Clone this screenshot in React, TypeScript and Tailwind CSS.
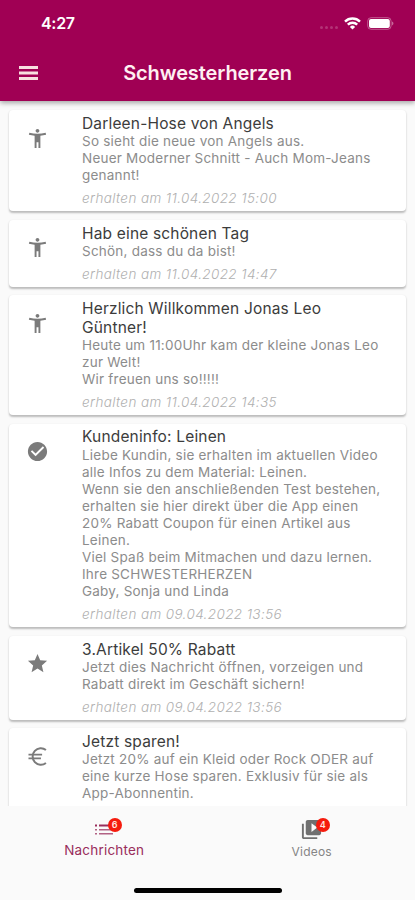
import type { ComponentType } from "react";
import { MdAccessibilityNew, MdCheckCircle, MdStar, MdVideoLibrary } from "react-icons/md";

interface Message {
  icon: ComponentType<{ className?: string }>;
  title: string;
  text: string;
  date?: string;
}

const EuroIcon = ({ className }: { className?: string }) => (
  <svg className={className} viewBox="0 0 24 24" fill="none" stroke="currentColor" strokeWidth="2.1">
    <path d="M20.8 5.2a8.6 8.6 0 1 0 0 13.6" />
    <path d="M2.6 10.1h14.2M2.6 14h13" strokeWidth="1.7" />
  </svg>
);

const messages: Message[] = [
  {
    icon: MdAccessibilityNew,
    title: "Darleen-Hose von Angels",
    text: "So sieht die neue von Angels aus.\nNeuer Moderner Schnitt - Auch Mom-Jeans\ngenannt!",
    date: "11.04.2022 15:00",
  },
  {
    icon: MdAccessibilityNew,
    title: "Hab eine schönen Tag",
    text: "Schön, dass du da bist!",
    date: "11.04.2022 14:47",
  },
  {
    icon: MdAccessibilityNew,
    title: "Herzlich Willkommen Jonas Leo\nGüntner!",
    text: "Heute um 11:00Uhr kam der kleine Jonas Leo\nzur Welt!\nWir freuen uns so!!!!!",
    date: "11.04.2022 14:35",
  },
  {
    icon: MdCheckCircle,
    title: "Kundeninfo: Leinen",
    text: "Liebe Kundin, sie erhalten im aktuellen Video\nalle Infos zu dem Material: Leinen.\nWenn sie den anschließenden Test bestehen,\nerhalten sie hier direkt über die App einen\n20% Rabatt Coupon für einen Artikel aus\nLeinen.\nViel Spaß beim Mitmachen und dazu lernen.\nIhre SCHWESTERHERZEN\nGaby, Sonja und Linda",
    date: "09.04.2022 13:56",
  },
  {
    icon: MdStar,
    title: "3.Artikel 50% Rabatt",
    text: "Jetzt dies Nachricht öffnen, vorzeigen und\nRabatt direkt im Geschäft sichern!",
    date: "09.04.2022 13:56",
  },
  {
    icon: EuroIcon,
    title: "Jetzt sparen!",
    text: "Jetzt 20% auf ein Kleid oder Rock ODER auf\neine kurze Hose sparen. Exklusiv für sie als\nApp-Abonnentin.",
  },
];

const StatusBar = () => (
  <div className="flex h-[46px] items-center justify-between pl-[41px] pr-[21px] text-white">
    <span className="text-[16px] font-semibold tracking-[-0.3px]">4:27</span>
    <div className="flex items-center">
      <div className="mr-[6px] mt-[8px] flex gap-[2px]">
        {[0, 1, 2, 3].map((dot) => (
          <span key={dot} className="h-[3px] w-[3px] rounded-full bg-white/20" />
        ))}
      </div>
      <svg width="17" height="13" viewBox="0 0 17 13" fill="none" stroke="white" strokeWidth="2.4">
        <path d="M1 4.6a10.6 10.6 0 0 1 15 0" />
        <path d="M3.8 7.7a6.7 6.7 0 0 1 9.4 0" />
        <path d="M8.5 12.6 5.9 9.9a3.7 3.7 0 0 1 5.2 0z" fill="white" stroke="none" />
      </svg>
      <svg className="ml-[6px]" width="27" height="13" viewBox="0 0 27 13">
        <rect x="0.7" y="0.7" width="23.4" height="11.6" rx="3.4" fill="none" stroke="white" strokeOpacity="0.35" />
        <rect x="2" y="2" width="20.8" height="9" rx="2" fill="white" />
        <path d="M25.2 4.6c1.6.6 1.6 3.2 0 3.8z" fill="white" fillOpacity="0.5" />
      </svg>
    </div>
  </div>
);

const Header = () => (
  <header className="relative z-10 h-[100.5px] shrink-0 bg-[#a00054] shadow-[0_2px_5px_rgba(0,0,0,0.35)]">
    <StatusBar />
    <div className="grid h-[54px] grid-cols-[56px_1fr_56px] items-center">
      <svg className="ml-[19px]" width="19" height="14" viewBox="0 0 19 14" fill="#f8dfe0">
        <path d="M0 0h19v3H0zM0 5.5h19v3H0zM0 11h19v3H0z" />
      </svg>
      <h1 className="text-center text-[20px] font-semibold tracking-[-0.1px] text-[#fff0f2]">Schwesterherzen</h1>
    </div>
  </header>
);

const MessageCard = ({ message }: { message: Message }) => {
  const Icon = message.icon;

  return (
    <article className="flex shrink-0 rounded-[4px] bg-white pb-[4.1px] pt-[4.9px] shadow-[0_1.5px_2px_rgba(0,0,0,0.25)] last:min-h-[101px]">
      <div className="w-[73px] shrink-0 pl-[17px] pt-[11.4px]">
        <Icon className="h-[23px] w-[23px] text-[#7b7b7b]" />
      </div>
      <div className="whitespace-pre">
        <h2 className="text-[15.5px] leading-[18.4px] tracking-[0.17px] text-[#3c3c3c]">{message.title}</h2>
        <p className="-mt-[0.3px] text-[13.5px] leading-[17.08px] tracking-[0.22px] text-[#8c8c8c]">{message.text}</p>
        {message.date && (
          <p className="mt-[5.8px] text-[13.5px] font-light italic leading-[17.05px] tracking-[0.38px] text-[#b0b0b0]">
            erhalten am {message.date}
          </p>
        )}
      </div>
    </article>
  );
};

const Badge = ({ count }: { count: number }) => (
  <span className="absolute -top-[2.5px] left-[14px] flex h-[14px] w-[14px] items-center justify-center rounded-full bg-[#f51b0d] text-[9px] font-semibold leading-none text-[#ffe3df]">
    {count}
  </span>
);

const BottomNav = () => (
  <nav className="z-10 flex h-[94px] shrink-0 flex-col items-center bg-[#fafafa]">
    <div className="grid h-[82px] w-full grid-cols-2">
      <div className="flex flex-col items-center pt-[14px] text-[#992e5c]">
        <div className="relative h-[20px] w-[20px]">
          <svg width="20" height="20" viewBox="0 0 20 20" fill="currentColor">
            <path d="M1 4.5h2v2H1zM5 4.5h14v2H5z" />
            <path d="M1 9h2v1.6H1zM5 9h14v1.6H5zM1 13h2v1.6H1zM5 13h14v1.6H5z" fillOpacity="0.75" />
          </svg>
          <Badge count={6} />
        </div>
        <span className="ml-px mt-[2px] text-[13.5px] leading-[17px] tracking-[0.2px]">Nachrichten</span>
      </div>
      <div className="flex flex-col items-center pt-[12px] text-[#707070]">
        <div className="relative h-[23px] w-[23px]">
          <MdVideoLibrary className="h-[23px] w-[23px]" />
          <div className="absolute left-[2px] top-[2px]">
            <Badge count={4} />
          </div>
        </div>
        <span className="ml-px mt-[2px] text-[12px] leading-[17px] tracking-[0.2px] text-[#858585]">Videos</span>
      </div>
    </div>
    <div className="h-[5px] w-[148px] rounded-full bg-black" />
  </nav>
);

const App = () => {
  return (
    <div className="flex h-[900px] w-[415px] flex-col overflow-hidden bg-[#fafafa] font-['Inter',sans-serif]">
      <Header />
      <main className="flex min-h-0 flex-1 flex-col gap-[8.5px] overflow-hidden px-[9px] pt-[9.8px]">
        {messages.map((message) => (
          <MessageCard key={message.title} message={message} />
        ))}
      </main>
      <BottomNav />
    </div>
  );
};

export default App;
